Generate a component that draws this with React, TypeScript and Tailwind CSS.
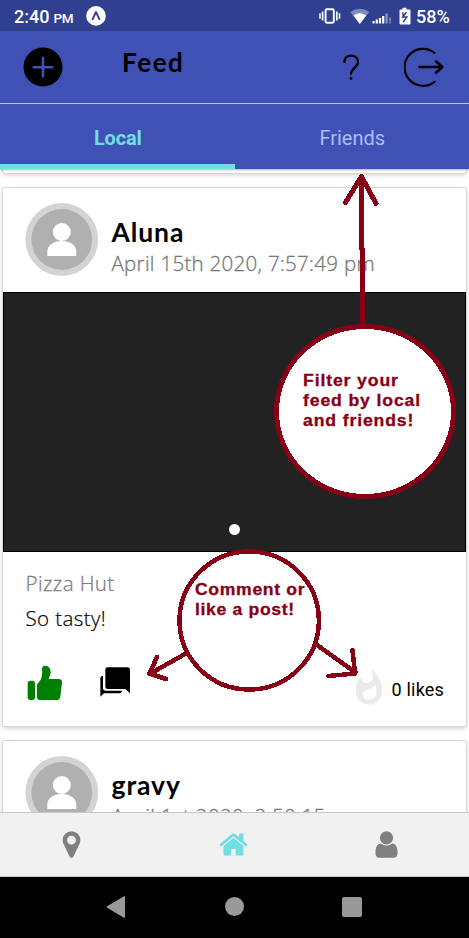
import React from "react";
import { MdWhatshot } from "react-icons/md";

function StatusBar() {
  return (
    <div className="flex h-[31px] shrink-0 items-center bg-[#303f8f] pl-[14px] font-['Roboto',sans-serif] text-white">
      <div className="flex w-[72px] items-baseline pt-[3px] font-medium">
        <span className="text-[18px] leading-[22px]">2:40</span>
        <span className="ml-[4px] text-[13.5px] leading-[22px] tracking-[-0.4px]">PM</span>
      </div>
      <svg className="h-5 w-5" viewBox="0 0 20 20">
        <circle cx="10" cy="9.9" r="9.8" fill="#fff" />
        <path d="M6.6 13.200 10 6l3.400 7.200" fill="none" stroke="#303f8f" strokeWidth="1.9" strokeLinecap="round" strokeLinejoin="round" />
      </svg>
      <svg className="ml-[213px] h-[18px] w-[22px]" viewBox="0 0 22 18" fill="none" stroke="#fff">
        <rect x="6.6" y="2.2" width="8.2" height="13.6" rx="1.2" strokeWidth="1.9" />
        <path d="M3.6 4.5v9M17.8 4.5v9" strokeWidth="1.7" />
        <path d="M1 6.3v5.4M20.5 6.3v5.4" strokeWidth="1.5" />
      </svg>
      <svg className="ml-[9px] h-[18px] w-[20px]" viewBox="0 0 20 18">
        <path d="M.3 5Q9.800-1.500 19.300 5L9.800 17z" fill="#fff" opacity=".38" />
        <path d="M3.400 8.500Q9.800 4.200 16.200 8.500L9.800 17z" fill="#fff" />
      </svg>
      <svg className="ml-[2px] h-[18px] w-[20px]" viewBox="0 0 20 18" fill="#fff">
        <path d="M.5 14h2.200v2.500H.5zM3.700 12.500h2.200v4H3.700zM6.900 11h2.200v5.500H6.900zM10.100 9h2.200v7.500h-2.200z" />
        <path d="M13.500 6.500h2.200v10h-2.200zM17.400 10.500h1.500v4h-1.500zM17.400 15h1.500v1.500h-1.500z" opacity=".45" />
      </svg>
      <svg className="ml-[7px] h-[18px] w-[12px]" viewBox="0 0 12 18">
        <path d="M3.500.800h4V2.500h3q1 0 1 1v13q0 1-1 1H1.500q-1 0-1-1v-13q0-1 1-1h2z" fill="#fff" />
        <path d="M7.500 5 3.700 10h4.200L4.300 15M4 5.200v4.500" fill="none" stroke="#303f8f" strokeWidth="1.400" />
      </svg>
      <span className="ml-[5px] pt-[3px] text-[18px] font-medium leading-[22px]">58%</span>
    </div>
  );
}

function Header() {
  return (
    <header className="flex h-[73px] shrink-0 items-center border-b border-[#c5c6cf] bg-[#3f51b5] pl-[23px]">
      <svg className="h-10 w-10" viewBox="0 0 40 40">
        <circle cx="20" cy="20" r="19.500" fill="#000" />
        <path d="M20 11v18.500M10.800 20.200h18.400" stroke="#3f51b5" strokeWidth="2.600" strokeLinecap="round" />
      </svg>
      <h1 className="mb-[11px] ml-[59px] w-[219px] font-['Lato',sans-serif] text-[26px] font-bold leading-[30px] tracking-[1.600px] text-black">Feed</h1>
      <svg className="h-[28px] w-[20px]" viewBox="0 0 20 28" fill="none" stroke="#000" strokeWidth="2.300" strokeLinecap="round">
        <path d="M3.400 9.200C3.200 5 6 2.600 10 2.600s7 2.500 7 6.400c0 5.500-7 6.200-7 12" />
        <circle cx="10" cy="25.500" r=".7" fill="#000" strokeWidth="1.500" />
      </svg>
      <svg className="ml-[43px] h-10 w-10" viewBox="0 0 40 40" fill="none" stroke="#000" strokeWidth="2.200" strokeLinecap="round" strokeLinejoin="round">
        <path d="M30.500 5.800A18.500 18.500 0 1 0 30.500 34.800" />
        <path d="M15.500 20h22.500M32 14.300 38.300 20l-6.300 5.700" strokeWidth="2.500" />
      </svg>
    </header>
  );
}

function Tabs() {
  return (
    <div className="z-10 grid h-[65px] shrink-0 grid-cols-2 bg-[#3f51b5] text-center font-['Roboto',sans-serif] text-[20px] leading-[28px] shadow-[0_1px_2px_rgba(0,0,0,0.3)]">
      <div className="border-b-[5px] border-[#70dfdf] pl-[1px] pt-[20px] font-bold tracking-[-0.2px] text-[#70dfdf]">Local</div>
      <div className="pt-[20px] pl-[1px] text-[#a9bdf8]">Friends</div>
    </div>
  );
}

function Avatar() {
  return (
    <svg className="h-[73px] w-[73px] shrink-0" viewBox="0 0 73 73">
      <circle cx="36.800" cy="36.500" r="36.400" fill="#d3d3d3" />
      <circle cx="36.800" cy="36.500" r="30.400" fill="#b0b0b0" />
      <circle cx="36.800" cy="29" r="9" fill="#fff" />
      <path d="M22.300 53v-4C22.300 42 28.300 38 36.800 38S51.300 42 51.300 49v4z" fill="#fff" />
    </svg>
  );
}

function PostHeader({ name, date }: { name: React.ReactNode; date: React.ReactNode }) {
  return (
    <div className="flex h-[104px] pl-[22px] pt-[15px]">
      <Avatar />
      <div className="ml-[13.500px] whitespace-nowrap">
        <div className="mt-[13px] font-['Lato',sans-serif] text-[26.500px] font-bold leading-[32px] text-black">{name}</div>
        <div className="mt-[1px] font-['Open_Sans',sans-serif] text-[20.500px] font-light leading-[28px] text-[#777] [-webkit-text-stroke:0.3px_#777]">{date}</div>
      </div>
    </div>
  );
}

function LikeIcon() {
  return (
    <svg className="mt-px h-[36px] w-[36px]" viewBox="81 375 108 108" fill="#008000">
      <rect x="83" y="422" width="22" height="58" rx="8" />
      <path d="M111 436Q111 431 115 428C124 420 128 408 126 387q0-10 9-10c12 0 17 10 17 19 0 9-4 14-6 21h30q11 0 10 11l-5 42q-2 10-12 10h-48q-10 0-10-10z" />
    </svg>
  );
}

function CommentsIcon() {
  return (
    <svg className="mt-[2px] h-[32px] w-[32px]" viewBox="297 377 96 96">
      <path d="M323 381h59q8 0 8 8v70l-14-13h-53q-7 0-7-7v-50q0-8 7-8z" />
      <path d="M309 406v38q0 7 7 7h50q-1 8-9 8h-45l-11 10v-56q0-6 8-7z" />
    </svg>
  );
}

function Feed() {
  return (
    <main className="flex min-h-0 flex-1 flex-col gap-[14px] overflow-hidden bg-white pl-[3px] pr-[3px]">
      <div className="h-[4px] shrink-0 rounded-b-[2px] shadow-[0_0_1px_1px_#d6d6d6,0_2px_4px_rgba(0,0,0,0.2)]" />
      <article className="mt-px h-[538px] shrink-0 rounded-[2px] bg-white shadow-[0_0_1px_1px_#d6d6d6,0_2px_5px_rgba(0,0,0,0.22)]">
        <PostHeader name={<span className="tracking-[0.900px]">Aluna</span>} date={<span className="tracking-[0.300px]">April 15th 2020, 7:57:49 pm</span>} />
        <div className="flex h-[260px] items-end justify-center border border-black bg-[#222] pb-[16px]">
          <span className="h-[11px] w-[11px] rounded-full bg-white" />
        </div>
        <div className="pl-[22.500px] pt-[16px] font-['Open_Sans',sans-serif] text-[20.500px] font-light leading-[30px] tracking-[0.400px]">
          <p className="text-[#808080] [-webkit-text-stroke:0.3px_#808080]">Pizza Hut</p>
          <p className="mt-[5px] text-black [-webkit-text-stroke:0.2px_#000]">So tasty!</p>
        </div>
        <div className="mt-[31px] flex items-start pl-[24px] font-['Roboto',sans-serif]">
          <LikeIcon />
          <div className="ml-[36px] w-[250px]"><CommentsIcon /></div>
          <MdWhatshot className="mt-[4px] h-[40px] w-[40px] text-[#ebebeb]" />
          <span className="ml-[2.500px] mt-[13.500px] whitespace-nowrap text-[18px] leading-[24px] tracking-[0.200px]">0 likes</span>
        </div>
      </article>
      <article className="mt-px h-[538px] shrink-0 rounded-[2px] bg-white shadow-[0_0_1px_1px_#d6d6d6,0_2px_5px_rgba(0,0,0,0.22)]">
        <PostHeader name={<span className="tracking-[0.900px]">gravy</span>} date={<span className="tracking-[0.380px]">April 1st 2020, 2:50:15</span>} />
      </article>
    </main>
  );
}

function BottomTabs() {
  return (
    <nav className="z-10 grid h-[65px] shrink-0 grid-cols-3 items-center border-y border-[#c6c6c6] bg-[#f1f1f1]">
      <svg className="ml-[56px] h-[31px] w-[31px]" viewBox="0 0 1792 1792" fill="#808080">
        <path d="M1152 640q0-106-75-181t-181-75-181 75-75 181 75 181 181 75 181-75 75-181zm256 0q0 109-33 179l-364 774q-16 33-47.500 52t-67.500 19-67.500-19-46.500-52l-365-774q-33-70-33-179 0-212 150-362t362-150 362 150 150 362z" />
      </svg>
      <svg className="ml-[62px] h-[31px] w-[31px]" viewBox="0 0 1792 1792" fill="#70dfdf">
        <path d="M1472 992v480q0 26-19 45t-45 19h-384v-384h-256v384h-384q-26 0-45-19t-19-45v-480q0-1 .5-3t.5-3l575-474 575 474q1 2 1 6zm223-69l-62 74q-8 9-21 11h-3q-13 0-21-7l-692-577-692 577q-12 8-24 7-13-2-21-11l-62-74q-8-10-7-23.500t11-21.500l719-599q32-26 76-26t76 26l244 204v-195q0-14 9-23t23-9h192q14 0 23 9t9 23v408l219 182q10 8 11 21.500t-7 23.500z" />
      </svg>
      <svg className="ml-[58px] h-[31px] w-[31px]" viewBox="0 0 1792 1792" fill="#808080">
        <path d="M1536 1399q0 109-62.500 187t-150.500 78h-854q-88 0-150.500-78t-62.500-187q0-85 8.500-160.500t31.500-152 58.500-131 94-89 134.500-34.500q131 128 313 128t313-128q76 0 134.500 34.500t94 89 58.500 131 31.500 152 8.500 160.500zm-256-887q0 159-112.500 271.500t-271.500 112.500-271.500-112.500-112.500-271.500 112.500-271.500 271.500-112.500 271.500 112.500 112.500 271.500z" />
      </svg>
    </nav>
  );
}

function SystemNav() {
  return (
    <div className="flex h-[61px] shrink-0 items-center bg-black pb-[2px] pl-[106px]">
      <svg className="h-[22px] w-[20px]" viewBox="0 0 20 22">
        <path d="M1.500 11 18.300 1v20z" fill="#999" stroke="#999" strokeLinejoin="round" strokeWidth="1.500" />
      </svg>
      <span className="ml-[99px] h-[19px] w-[19px] rounded-full bg-[#999]" />
      <span className="ml-[98px] h-[20px] w-[20px] rounded-[2px] bg-[#999]" />
    </div>
  );
}

function Annotations() {
  return (
    <div className="pointer-events-none absolute inset-0 z-20 font-['Liberation_Sans',Arial,sans-serif] text-[16px] font-bold leading-[20px] text-[#880015]">
      <svg className="absolute inset-0 h-full w-full" viewBox="0 0 469 938" fill="none" stroke="#880015" strokeWidth="5" strokeLinecap="round" strokeLinejoin="round" shapeRendering="crispEdges">
        <path d="M362.500 327V250L361.500 248V177M345.500 202.500 361.500 176.500 376 203.500" />
        <ellipse cx="365" cy="411.500" rx="88.500" ry="85" fill="#fff" />
        <ellipse cx="249.200" cy="620.500" rx="69.700" ry="69" fill="#fff" strokeWidth="4.500" />
        <path d="M186 653.500 149.500 674M157 657 149.500 673.500 166 679M317 645 355.500 672.500M352.500 650 355 673.500 328.500 676" strokeWidth="4.500" />
      </svg>
      <p className="absolute left-[303px] top-[371px] origin-left scale-x-[1.1] whitespace-nowrap tracking-[0.800px] [-webkit-text-stroke:0.3px_#880015]">Filter your<br />feed by local<br />and friends!</p>
      <p className="absolute left-[195px] top-[580px] origin-left scale-x-[1.1] whitespace-nowrap tracking-[0.600px] [-webkit-text-stroke:0.3px_#880015]">Comment or<br />like a post!</p>
    </div>
  );
}

export default function App() {
  return (
    <div className="relative flex h-[938px] w-[469px] flex-col overflow-hidden bg-white">
      <StatusBar />
      <Header />
      <Tabs />
      <Feed />
      <BottomTabs />
      <SystemNav />
      <Annotations />
    </div>
  );
}
